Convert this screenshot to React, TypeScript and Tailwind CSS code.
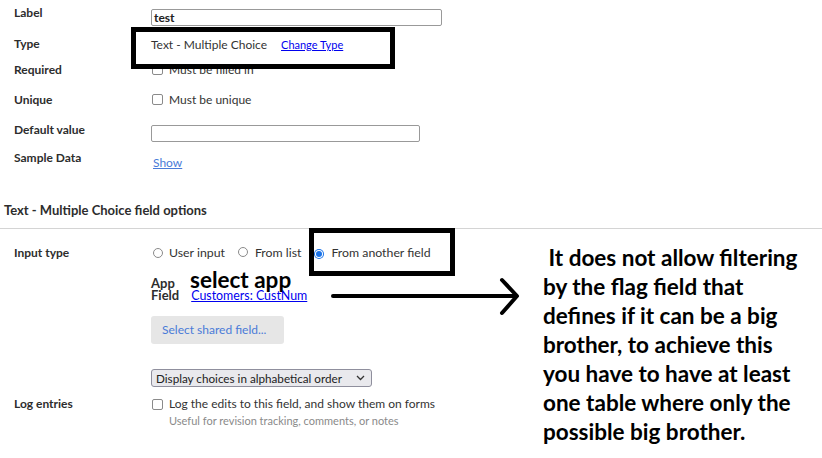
import React from "react";

const Check: React.FC = () => (
  <span className="inline-block w-[11px] h-[11px] rounded-[2px] border border-[#8a8a8a] bg-white shrink-0" />
);

const Radio: React.FC<{ on?: boolean }> = ({ on }) =>
  on ? (
    <span className="inline-flex w-[10px] h-[10px] rounded-full bg-[#1a73e8] items-center justify-center shrink-0">
      <span className="w-[8px] h-[8px] rounded-full bg-white flex items-center justify-center">
        <span className="w-[6px] h-[6px] rounded-full bg-[#1a73e8]" />
      </span>
    </span>
  ) : (
    <span className="inline-block w-[10px] h-[10px] rounded-full border border-[#8a8a8a] bg-white shrink-0" />
  );

const Row: React.FC<{ label: string; h: string; children?: React.ReactNode }> = ({ label, h, children }) => (
  <div className={`flex ${h}`}>
    <div className="w-[151px] shrink-0 pl-[14px] font-bold text-[#2d2d2d] leading-4">{label}</div>
    <div className="flex-1">{children}</div>
  </div>
);

const lines = [
  "\u00a0It does not allow filtering",
  "by the flag field that",
  "defines if it can be a big",
  "brother, to achieve this",
  "you have to have at least",
  "one table where only the",
  "possible big brother.",
];

export default function App() {
  return (
    <div className="relative w-[822px] h-[458px] bg-white overflow-hidden font-['Lato',sans-serif] text-[12px] text-[#333]">
      <div className="pt-[5px]">
        <Row label="Label" h="h-[30.5px]">
          <div className="mt-[4px] w-[291px] h-[17px] border border-[#999] rounded-[2px] pl-[2px] font-bold leading-[15px] text-[#222]">
            test
          </div>
        </Row>
        <Row label="Type" h="h-[26px]">
          <div className="mt-[1px] flex leading-4">
            <span>Text - Multiple Choice</span>
            <a className="ml-[14px] text-[11px] text-[#0000ee] underline">Change Type</a>
          </div>
        </Row>
        <Row label="Required" h="h-[30px]">
          <div className="flex items-center gap-[6px] leading-4 pl-[1px]">
            <Check />
            <span>Must be filled in</span>
          </div>
        </Row>
        <Row label="Unique" h="h-[30px]">
          <div className="flex items-center gap-[6px] leading-4 pl-[1px]">
            <Check />
            <span>Must be unique</span>
          </div>
        </Row>
        <Row label="Default value" h="h-[28px]">
          <div className="mt-[3.5px] w-[269px] h-[17px] border border-[#999] rounded-[2px]" />
        </Row>
        <Row label="Sample Data" h="h-[51.5px]">
          <a className="block mt-[5.5px] pl-[2px] leading-4 text-[#4a7bd8] underline">Show</a>
        </Row>
      </div>

      <div className="pl-[4px] pb-[9px] border-b border-[#d4d4d4] font-bold text-[13px] leading-[18px] text-[#2d2d2d]">
        Text - Multiple Choice field options
      </div>

      <div className="pt-[16px]">
        <div className="flex">
          <div className="w-[151px] shrink-0 pl-[14px] font-bold text-[#2d2d2d] leading-4">Input type</div>
          <div className="flex-1">
            <div className="flex items-center leading-4 pl-[2px] text-[12.3px]">
              <Radio />
              <span className="ml-[6px]">User input</span>
              <span className="ml-[13px]"><Radio /></span>
              <span className="ml-[7px]">From list</span>
              <span className="ml-[13px]"><Radio on /></span>
              <span className="ml-[7px]">From another field</span>
            </div>
            <div className="mt-[16px] flex items-end">
              <div className="font-bold text-[13px] text-[#2d2d2d] leading-[12px]">
                <div>App</div>
                <div>Field</div>
              </div>
              <a className="ml-[12px] text-[12.4px] leading-4 text-[#0000ee] underline mb-[-3px]">Customers: CustNum</a>
            </div>
            <div className="mt-[15px] w-[133px] h-[28px] rounded-[3px] bg-[#e6e6e6] text-[#4a7bd8] leading-[28px] pl-[11px]">
              Select shared field...
            </div>
            <div className="mt-[25px] w-[221px] h-[18px] rounded-[3px] border border-[#8f8f9d] bg-[#e9e9ed] flex items-center justify-between pl-[4px] pr-[6px] text-[#222]">
              <span className="leading-4 text-[11.7px]">Display choices in alphabetical order</span>
              <svg width="9" height="6" viewBox="0 0 9 6">
                <polyline points="1,1 4.5,4.5 8,1" fill="none" stroke="#333" strokeWidth="1.3" />
              </svg>
            </div>
          </div>
        </div>

        <div className="flex mt-[9px]">
          <div className="w-[151px] shrink-0 pl-[14px] font-bold text-[#2d2d2d] leading-4">Log entries</div>
          <div className="flex-1 pl-[1px]">
            <div className="flex items-center gap-[6px] leading-4">
              <Check />
              <span>Log the edits to this field, and show them on forms</span>
            </div>
            <div className="pl-[17px] mt-[2px] text-[11px] leading-[14px] text-[#8a8a8a]">
              Useful for revision tracking, comments, or notes
            </div>
          </div>
        </div>
      </div>

      {/* annotations drawn over the form */}
      <div className="absolute left-[131px] top-[27px] w-[264px] h-[42px] border-[5px] border-black" />
      <div className="absolute left-[309px] top-[228px] w-[146px] h-[48px] border-[5px] border-black" />
      <div className="absolute left-[190px] top-[268px] font-bold text-[22.5px] leading-6 text-black">select app</div>
      <svg className="absolute left-[328px] top-[276px]" width="196" height="40" viewBox="0 0 196 40">
        <line x1="5" y1="20" x2="188" y2="20" stroke="#000" strokeWidth="4" strokeLinecap="round" />
        <polyline points="174,4 189,20 174,37" fill="none" stroke="#000" strokeWidth="4" strokeLinecap="round" strokeLinejoin="round" />
      </svg>
      <div className="absolute left-[543px] top-[243px] font-bold text-[22.5px] leading-[29px] text-black">
        {lines.map((l) => (
          <div key={l} className="whitespace-pre">{l}</div>
        ))}
      </div>
    </div>
  );
}
